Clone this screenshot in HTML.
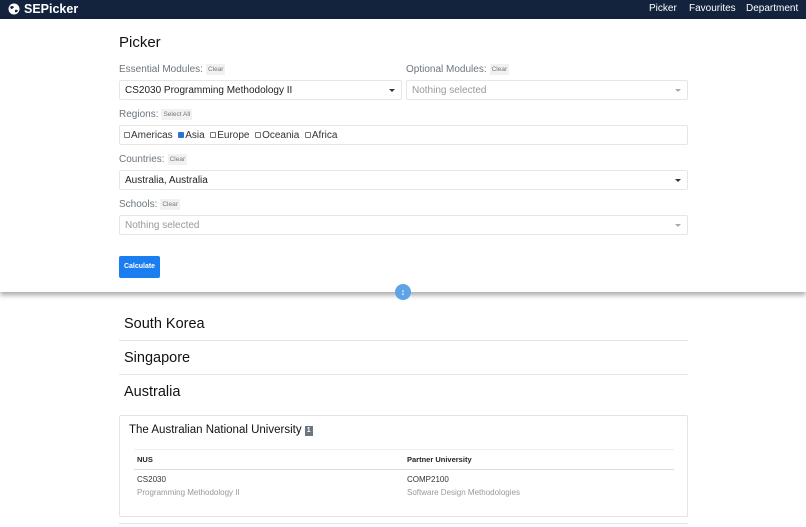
<!DOCTYPE html>
<html><head><style>
*{margin:0;padding:0;box-sizing:border-box}
body{width:806px;height:527px;overflow:hidden;background:#fff;font-family:"Liberation Sans",sans-serif;position:relative;color:#212529}
.a{position:absolute}
.nav{left:0;top:0;width:806px;height:19px;background:#13223d;color:#fff}
.lbl{font-size:10px;color:#6c757d}
.clr{display:inline-block;font-size:6.5px;background:#f1f1f1;color:#777;padding:2px 2px;margin-left:3px;vertical-align:1px}
.sel{height:20px;border:1px solid #e6e6e6;border-radius:2px;font-size:10px;line-height:20px;padding-left:5px}
.sel .car{position:absolute;right:6px;top:8px;border-left:3px solid transparent;border-right:3px solid transparent;border-top:3px solid #333}
.h{font-size:14.5px;color:#111}
.hr{height:1px;background:#e3e3e3}
.cb{display:inline-block;width:6px;height:6px;border:1px solid #777;border-radius:1px;margin-right:1px}
</style></head><body>
<div class="a nav">
 <svg class="a" style="left:8px;top:3px" width="12" height="12" viewBox="0 0 12 12"><circle cx="6" cy="6" r="5.5" fill="#fff"/><path d="M2 4 Q4 2 6 4 Q5 6 3 6Z M7 7 Q9 6 10 8 Q8 10 7 9Z" fill="#13223d"/></svg>
 <div class="a" style="left:24px;top:2px;font-size:12.5px;font-weight:bold">SEPicker</div>
 <div class="a" style="left:649px;top:3px;font-size:10px">Picker</div>
 <div class="a" style="left:689px;top:3px;font-size:10px">Favourites</div>
 <div class="a" style="left:746px;top:3px;font-size:10px">Department</div>
</div>
<div class="a" style="left:0;top:19px;width:806px;height:273px;background:#fff;box-shadow:0 3px 5px rgba(0,0,0,.35)"></div>
<div class="a" style="left:119px;top:34px;font-size:15px;font-weight:500;color:#111">Picker</div>
<div class="a lbl" style="left:119px;top:64px">Essential Modules:<span class="clr">Clear</span></div>
<div class="a lbl" style="left:406px;top:64px">Optional Modules:<span class="clr">Clear</span></div>
<div class="a sel" style="left:119px;top:80px;width:283px;color:#222">CS2030 Programming Methodology II<span class="car"></span></div>
<div class="a sel" style="left:406px;top:80px;width:282px;color:#999">Nothing selected<span class="car" style="border-top-color:#aaa"></span></div>
<div class="a lbl" style="left:119px;top:109px">Regions:<span class="clr">Select All</span></div>
<div class="a sel" style="left:119px;top:125px;width:569px;padding-left:4px;color:#333"><span class="cb"></span>Americas &nbsp;<span class="cb" style="background:#2a73d6;border-color:#2a73d6"></span>Asia &nbsp;<span class="cb"></span>Europe &nbsp;<span class="cb"></span>Oceania &nbsp;<span class="cb"></span>Africa</div>
<div class="a lbl" style="left:119px;top:154px">Countries:<span class="clr">Clear</span></div>
<div class="a sel" style="left:119px;top:170px;width:569px;color:#222">Australia, Australia<span class="car"></span></div>
<div class="a lbl" style="left:119px;top:199px">Schools:<span class="clr">Clear</span></div>
<div class="a sel" style="left:119px;top:215px;width:569px;color:#999">Nothing selected<span class="car" style="border-top-color:#aaa"></span></div>
<div class="a" style="left:119px;top:256px;width:41px;height:22px;background:#1a7df0;border-radius:2px;color:#fff;font-size:7px;font-weight:bold;line-height:22px;text-align:center">Calculate</div>
<div class="a" style="left:395px;top:284px;width:16px;height:16px;border-radius:50%;background:#5ea3e8;color:#fff;font-size:9px;line-height:16px;text-align:center;font-weight:bold">↕</div>
<div class="a h" style="left:124px;top:316px">South Korea</div>
<div class="a hr" style="left:119px;top:340px;width:569px"></div>
<div class="a h" style="left:124px;top:350px">Singapore</div>
<div class="a hr" style="left:119px;top:374px;width:569px"></div>
<div class="a h" style="left:124px;top:384px">Australia</div>
<div class="a" style="left:119px;top:415px;width:569px;height:102px;border:1px solid #e3e3e3;border-radius:2px"></div>
<div class="a" style="left:129px;top:424px;font-size:11.5px;color:#111">The Australian National University <span style="display:inline-block;background:#6c757d;color:#fff;font-size:7px;padding:0 2px;line-height:10px;vertical-align:1px;font-weight:bold">1</span></div>
<div class="a hr" style="left:134px;top:449px;width:540px;background:#eee"></div>
<div class="a" style="left:137px;top:455px;font-size:7.5px;font-weight:bold">NUS</div>
<div class="a" style="left:407px;top:455px;font-size:7.5px;font-weight:bold">Partner University</div>
<div class="a hr" style="left:134px;top:469px;width:540px;background:#ddd"></div>
<div class="a" style="left:137px;top:475px;font-size:8px;color:#333">CS2030</div>
<div class="a" style="left:137px;top:488px;font-size:8px;color:#999">Programming Methodology II</div>
<div class="a" style="left:407px;top:475px;font-size:8px;color:#333">COMP2100</div>
<div class="a" style="left:407px;top:488px;font-size:8px;color:#999">Software Design Methodologies</div>
<div class="a hr" style="left:119px;top:523px;width:569px"></div>
</body></html>
